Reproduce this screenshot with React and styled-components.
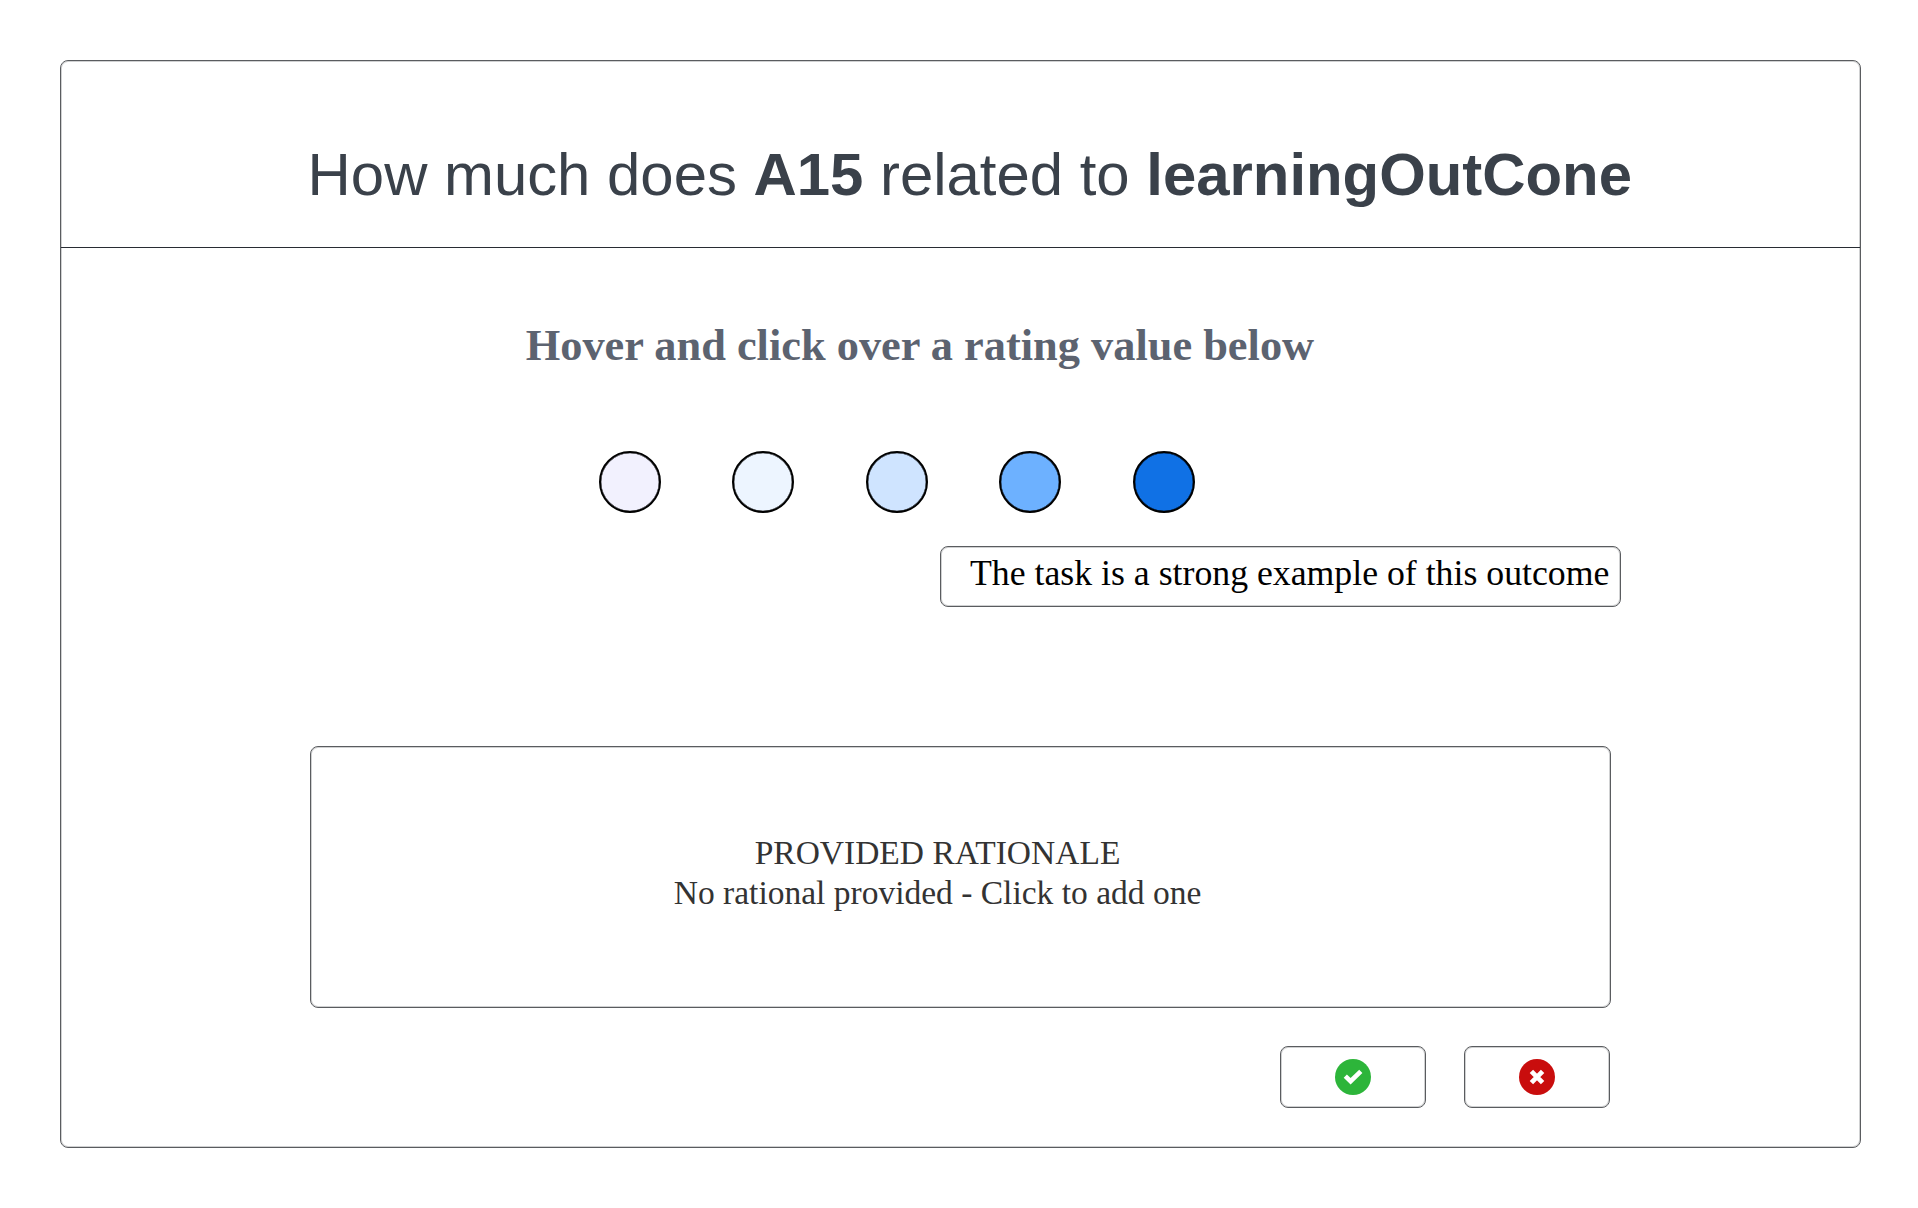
import React from "react";
import styled, { createGlobalStyle } from "styled-components";

const GlobalStyle = createGlobalStyle`
  * { box-sizing: border-box; }
  body { margin: 0; background: #fff; }
`;

const serif = `"Liberation Serif", "Times New Roman", serif`;
const sans = `"Liberation Sans", Arial, sans-serif`;

const Page = styled.div`
  width: 1918px;
  height: 1208px;
  padding: 60px;
  background: #fff;
`;

const Outlined = styled.div`
  border: 1px solid #5a5c5f;
  border-radius: 8px;
  box-shadow: inset 0 0 0 1px #d0d1d2;
`;

const Panel = styled(Outlined)`
  display: flex;
  flex-direction: column;
  width: 1801px;
  height: 1088px;
`;

const Header = styled.header`
  height: 187px;
  padding: 79px 0 0 246.6px;
  border-bottom: 1px solid #282c33;
`;

const Title = styled.h1`
  margin: 0;
  font: 400 59.88px/70px ${sans};
  color: #3a414a;
  white-space: nowrap;
`;

const Body = styled.main`
  display: flex;
  flex-direction: column;
  padding-left: 249px;
`;

const Prompt = styled.h2`
  margin: 71px 0 0 215.7px;
  font: 700 44.38px/52px ${serif};
  color: #5c6370;
  white-space: nowrap;
`;

const Ratings = styled.div`
  display: flex;
  gap: 71.4px;
  margin: 80px 0 0 289px;
`;

const Rating = styled.button`
  width: 62px;
  height: 62px;
  padding: 0;
  border: 2px solid #000;
  border-radius: 50%;
  box-shadow: inset 0 0 0 0.3px #000;
  background: ${(p) => p.$fill};
`;

const Hint = styled(Outlined)`
  width: 681px;
  height: 61px;
  margin: 33px 0 0 630px;
  padding: 5px 0 0 29px;
  font: 400 35.75px/42px ${serif};
  color: #000;
  white-space: nowrap;
`;

const Rationale = styled(Outlined)`
  width: 1301px;
  height: 262px;
  margin-top: 139px;
  padding: 86px 46px 0 0;
  font: 400 33.5px/40px ${serif};
  color: #333;
  text-align: center;
`;

const Line = styled.p`
  margin: 0;
`;

const Actions = styled.div`
  display: flex;
  justify-content: flex-end;
  gap: 38px;
  width: 1300px;
  margin-top: 38px;
`;

const Action = styled(Outlined).attrs({ as: "button" })`
  display: flex;
  align-items: center;
  justify-content: center;
  width: 146px;
  height: 62px;
  padding: 0 0 1px;
  background: #fff;
`;

const Glyph = ({ fill, d, width }) => (
  <svg width="36" height="36" viewBox="0 0 36 36">
    <circle cx="18" cy="18" r="18" fill={fill} />
    <path d={d} fill="none" stroke="#fff" strokeWidth={width} />
  </svg>
);

const scale = ["#f2f1fe", "#edf5ff", "#cfe4ff", "#6db1ff", "#1071e5"];

export default function App() {
  return (
    <>
      <GlobalStyle />
      <Page>
        <Panel>
          <Header>
            <Title>
              How much does <b>A15</b> related to <b>learningOutCone</b>
            </Title>
          </Header>
          <Body>
            <Prompt>Hover and click over a rating value below</Prompt>
            <Ratings>
              {scale.map((c, i) => (
                <Rating key={c} $fill={c} aria-label={`Rating ${i + 1}`} />
              ))}
            </Ratings>
            <Hint>The task is a strong example of this outcome</Hint>
            <Rationale>
              <Line>PROVIDED RATIONALE</Line>
              <Line>No rational provided - Click to add one</Line>
            </Rationale>
            <Actions>
              <Action aria-label="Confirm">
                <Glyph fill="#2db53a" width="4.6" d="M10.3 17.1 15.6 22.2 25.8 12.4" />
              </Action>
              <Action aria-label="Cancel">
                <Glyph fill="#c90d0d" width="4.8" d="M12.4 12.4 23.6 23.6M23.6 12.4 12.4 23.6" />
              </Action>
            </Actions>
          </Body>
        </Panel>
      </Page>
    </>
  );
}
